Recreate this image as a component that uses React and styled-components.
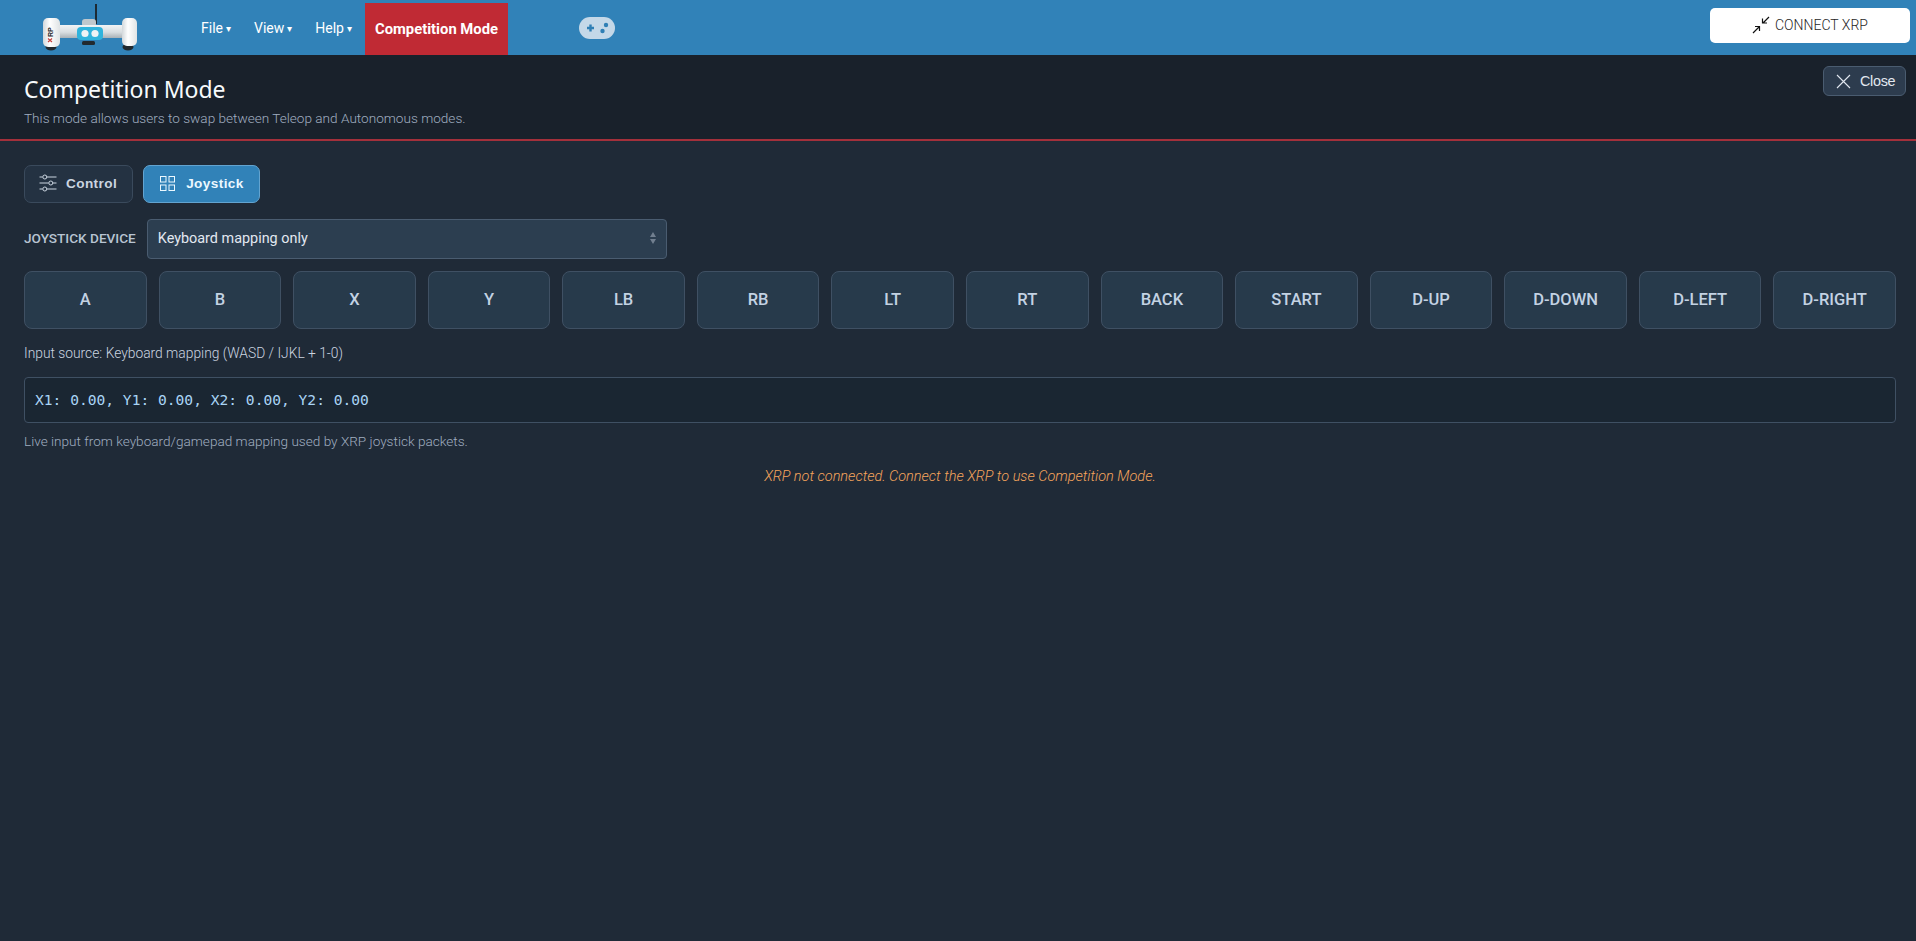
import React from "react";
import styled, { createGlobalStyle } from "styled-components";

const keys = ["A", "B", "X", "Y", "LB", "RB", "LT", "RT", "BACK", "START", "D-UP", "D-DOWN", "D-LEFT", "D-RIGHT"];

const App = () => {
  return (
    <Page>
      <GlobalStyle />
      <NavBar>
        <LogoSlot>
          <XrpLogo />
        </LogoSlot>
        <Menu>
          <MenuItem>File<Caret>▾</Caret></MenuItem>
          <MenuItem>View<Caret>▾</Caret></MenuItem>
          <MenuItem>Help<Caret>▾</Caret></MenuItem>
        </Menu>
        <ActiveMode>Competition Mode</ActiveMode>
        <GamepadSlot>
          <GamepadIcon />
        </GamepadSlot>
        <ConnectButton>
          <ConnectIcon />
          CONNECT XRP
        </ConnectButton>
      </NavBar>
      <Header>
        <div>
          <Title>Competition Mode</Title>
          <Subtitle>This mode allows users to swap between Teleop and Autonomous modes.</Subtitle>
        </div>
        <CloseButton>
          <CloseIcon />
          Close
        </CloseButton>
      </Header>
      <Content>
        <Tabs>
          <Tab>
            <SlidersIcon />
            Control
          </Tab>
          <Tab $active>
            <GridIcon />
            Joystick
          </Tab>
        </Tabs>
        <DeviceRow>
          <DeviceLabel>JOYSTICK DEVICE</DeviceLabel>
          <DeviceSelect>
            Keyboard mapping only
            <SelectArrows />
          </DeviceSelect>
        </DeviceRow>
        <KeyGrid>
          {keys.map((k) => (
            <KeyButton key={k}>{k}</KeyButton>
          ))}
        </KeyGrid>
        <SourceText>Input source: Keyboard mapping (WASD / IJKL + 1-0)</SourceText>
        <AxisBox>X1: 0.00, Y1: 0.00, X2: 0.00, Y2: 0.00</AxisBox>
        <HintText>Live input from keyboard/gamepad mapping used by XRP joystick packets.</HintText>
        <Warning>XRP not connected. Connect the XRP to use Competition Mode.</Warning>
      </Content>
    </Page>
  );
};

export default App;

const XrpLogo = () => (
  <svg width="96" height="55" viewBox="0 0 96 55">
    <defs>
      <linearGradient id="bodyShade" x1="0" y1="0" x2="0" y2="1">
        <stop offset="0" stopColor="#f2f4f5" />
        <stop offset="0.55" stopColor="#d9dee1" />
        <stop offset="1" stopColor="#a9b1b6" />
      </linearGradient>
      <linearGradient id="endShade" x1="0" y1="0" x2="1" y2="0">
        <stop offset="0" stopColor="#d3d8db" />
        <stop offset="0.4" stopColor="#ffffff" />
        <stop offset="1" stopColor="#dfe3e5" />
      </linearGradient>
    </defs>
    <rect x="53" y="4" width="2" height="20" fill="#1c2a33" />
    <rect x="40" y="19" width="14" height="8" rx="3" fill="#bfc8cd" />
    <ellipse cx="9" cy="47" rx="5.5" ry="3.5" fill="#22292e" />
    <ellipse cx="86" cy="47" rx="5.5" ry="3.5" fill="#22292e" />
    <rect x="40" y="41" width="13" height="4" rx="1.5" fill="#22292e" />
    <rect x="14" y="25" width="70" height="13" fill="url(#bodyShade)" />
    <rect x="1" y="18" width="17" height="29" rx="5" fill="url(#endShade)" />
    <rect x="80" y="18" width="15" height="28" rx="5" fill="url(#endShade)" />
    <rect x="35" y="27" width="26" height="13" rx="4" fill="#2fb3dc" />
    <circle cx="43" cy="33.5" r="3.6" fill="#eef3f5" />
    <circle cx="53" cy="33.5" r="3.6" fill="#eef3f5" />
    <path d="M6 42l4-3.5M6 38.5l4 3.5" stroke="#c5403c" strokeWidth="1.2" />
    <text x="0" y="0" transform="translate(10.5 37) rotate(-90)" fontFamily="Liberation Sans" fontWeight="700" fontSize="7" fill="#1d2328">RP</text>
  </svg>
);

const GamepadIcon = () => (
  <svg width="36" height="22" viewBox="0 0 36 22">
    <rect width="36" height="22" rx="11" fill="#c4d8e8" />
    <path d="M8 11h7M11.5 7.5v7" stroke="#2f7fb5" strokeWidth="2.4" />
    <circle cx="27" cy="8" r="2.2" fill="#2f7fb5" />
    <circle cx="23.5" cy="14" r="2.2" fill="#2f7fb5" />
  </svg>
);

const ConnectIcon = () => (
  <svg width="18" height="18" viewBox="0 0 18 18" fill="none" stroke="#111" strokeWidth="1.2">
    <path d="M1 17l6-6M3 10.5h4.5V15M17 1l-6 6M10.5 2.5V7H15" />
  </svg>
);

const CloseIcon = () => (
  <svg width="15" height="15" viewBox="0 0 15 15" fill="none" stroke="#e2e8f0" strokeWidth="1.1">
    <path d="M1 1l13 13M14 1L1 14" />
  </svg>
);

const SlidersIcon = () => (
  <svg width="18" height="18" viewBox="0 0 18 18" fill="none" stroke="#cbd5e0" strokeWidth="1">
    <path d="M0.5 3h3M8 3h9.5M0.5 9h9M14 9h3.5M0.5 15h3M8 15h9.5" />
    <circle cx="5.8" cy="3" r="2" />
    <circle cx="11.8" cy="9" r="2" />
    <circle cx="5.8" cy="15" r="2" />
  </svg>
);

const GridIcon = () => (
  <svg width="15" height="15" viewBox="0 0 15 15" fill="none" stroke="#ebf8ff" strokeWidth="1">
    <rect x="0.5" y="0.5" width="5.5" height="5.5" />
    <rect x="9" y="0.5" width="5.5" height="5.5" />
    <rect x="0.5" y="9" width="5.5" height="5.5" />
    <rect x="9" y="9" width="5.5" height="5.5" />
  </svg>
);

const SelectArrows = () => (
  <svg width="6" height="12" viewBox="0 0 6 12" fill="#717f8f">
    <path d="M3 0l3 5H0zM3 12L0 7h6z" />
  </svg>
);

const GlobalStyle = createGlobalStyle`
  html, body {
    margin: 0;
    padding: 0;
    height: 100%;
    background: #1f2a37;
  }
  * {
    box-sizing: border-box;
  }
`;

const Page = styled.div`
  width: 1916px;
  height: 941px;
  overflow: hidden;
  background: #1f2a37;
  font-family: Roboto, sans-serif;
`;

const NavBar = styled.div`
  height: 55px;
  background: #3182b8;
  display: flex;
  align-items: flex-end;
  padding-right: 6px;
`;

const LogoSlot = styled.div`
  width: 188px;
  height: 55px;
  padding-left: 42px;
  display: flex;
  align-items: flex-start;
`;

const Menu = styled.div`
  display: flex;
  height: 55px;
  align-items: center;
  gap: 23px;
  padding-left: 13px;
  width: 177px;
`;

const MenuItem = styled.span`
  color: #fff;
  font-size: 14px;
  white-space: nowrap;
`;

const Caret = styled.span`
  font-size: 10px;
  margin-left: 3px;
  position: relative;
  top: -1px;
`;

const ActiveMode = styled.div`
  width: 143px;
  height: 52px;
  background: #c02a34;
  color: #fff;
  font-size: 14.8px;
  font-weight: 700;
  display: flex;
  align-items: center;
  justify-content: center;
  white-space: nowrap;
`;

const GamepadSlot = styled.div`
  height: 55px;
  margin-left: 71px;
  display: flex;
  align-items: center;
  flex: 1;
`;

const ConnectButton = styled.button`
  width: 200px;
  height: 35px;
  margin-bottom: 12px;
  padding: 0 0 2px;
  border: none;
  border-radius: 5px;
  background: #fff;
  color: #1f1f1f;
  font-family: Roboto, sans-serif;
  font-size: 14px;
  font-weight: 300;
  display: flex;
  align-items: center;
  justify-content: center;
  gap: 5px;
`;

const Header = styled.div`
  height: 86px;
  background: #19212b;
  border-bottom: 2px solid #a3303b;
  display: flex;
  justify-content: space-between;
  align-items: flex-start;
  padding: 18px 10px 0 24px;
`;

const Title = styled.div`
  font-family: "Noto Sans", sans-serif;
  font-size: 23px;
  line-height: 32px;
  color: #f7fafc;
`;

const Subtitle = styled.div`
  font-size: 13.6px;
  font-weight: 300;
  line-height: 20px;
  margin-top: 3px;
  color: #a0aec0;
`;

const CloseButton = styled.button`
  width: 83px;
  height: 30px;
  margin-top: -7px;
  padding-left: 12px;
  border: 1px solid #4a5c70;
  border-radius: 6px;
  background: #2d3c4e;
  color: #e2e8f0;
  font-family: "Liberation Sans", sans-serif;
  font-size: 14.4px;
  letter-spacing: -0.3px;
  display: flex;
  align-items: center;
  gap: 9px;
`;

const Content = styled.div`
  padding: 24px 20px 0 24px;
`;

const Tabs = styled.div`
  display: flex;
  gap: 10px;
`;

const Tab = styled.button`
  height: 38px;
  padding: ${(p) => (p.$active ? "0 15px 2px 16px" : "0 15px 2px 14px")};
  border-radius: 7px;
  border: 1px solid ${(p) => (p.$active ? "#63a4d0" : "#3a4a5c")};
  background: ${(p) => (p.$active ? "#3182b8" : "#243242")};
  color: ${(p) => (p.$active ? "#ebf8ff" : "#cbd5e0")};
  font-family: "Liberation Sans", sans-serif;
  font-size: 13.6px;
  font-weight: 700;
  letter-spacing: 0.4px;
  display: flex;
  align-items: center;
  gap: ${(p) => (p.$active ? "11px" : "9px")};
`;

const DeviceRow = styled.div`
  display: flex;
  align-items: center;
  gap: 11px;
  margin-top: 16px;
`;

const DeviceLabel = styled.div`
  font-size: 13.6px;
  font-weight: 500;
  padding-bottom: 2px;
  color: #b8c4d2;
  white-space: nowrap;
`;

const DeviceSelect = styled.div`
  width: 520px;
  height: 40px;
  padding: 0 10px 2px 10px;
  border: 1px solid #4a5c70;
  border-radius: 4px;
  background: #2c3e50;
  color: #e2e8f0;
  font-size: 14.4px;
  display: flex;
  align-items: center;
  justify-content: space-between;
`;

const KeyGrid = styled.div`
  display: grid;
  grid-template-columns: repeat(14, 1fr);
  gap: 12px;
  margin-top: 12px;
`;

const KeyButton = styled.button`
  height: 58px;
  border: 1px solid #3f5063;
  border-radius: 8px;
  background: #273a4b;
  color: #c3d2e3;
  font-family: Roboto, sans-serif;
  font-size: 16.5px;
  font-weight: 500;
  padding: 0 0 2px;
`;

const SourceText = styled.div`
  margin-top: 14px;
  font-size: 13.8px;
  line-height: 20px;
  color: #cbd5e0;
  font-weight: 300;
`;

const AxisBox = styled.div`
  height: 46px;
  margin-top: 14px;
  padding: 0 10px 2px;
  border: 1px solid #3f5063;
  border-radius: 4px;
  background: #1a2632;
  color: #a9d4f5;
  font-family: "DejaVu Sans Mono", monospace;
  font-size: 14.6px;
  display: flex;
  align-items: center;
`;

const HintText = styled.div`
  margin-top: 8px;
  font-size: 13.6px;
  line-height: 20px;
  font-weight: 300;
  color: #a0aec0;
`;

const Warning = styled.div`
  margin-top: 16px;
  font-size: 14.5px;
  line-height: 20px;
  font-style: italic;
  font-weight: 300;
  text-align: center;
  color: #f6a55c;
`;
